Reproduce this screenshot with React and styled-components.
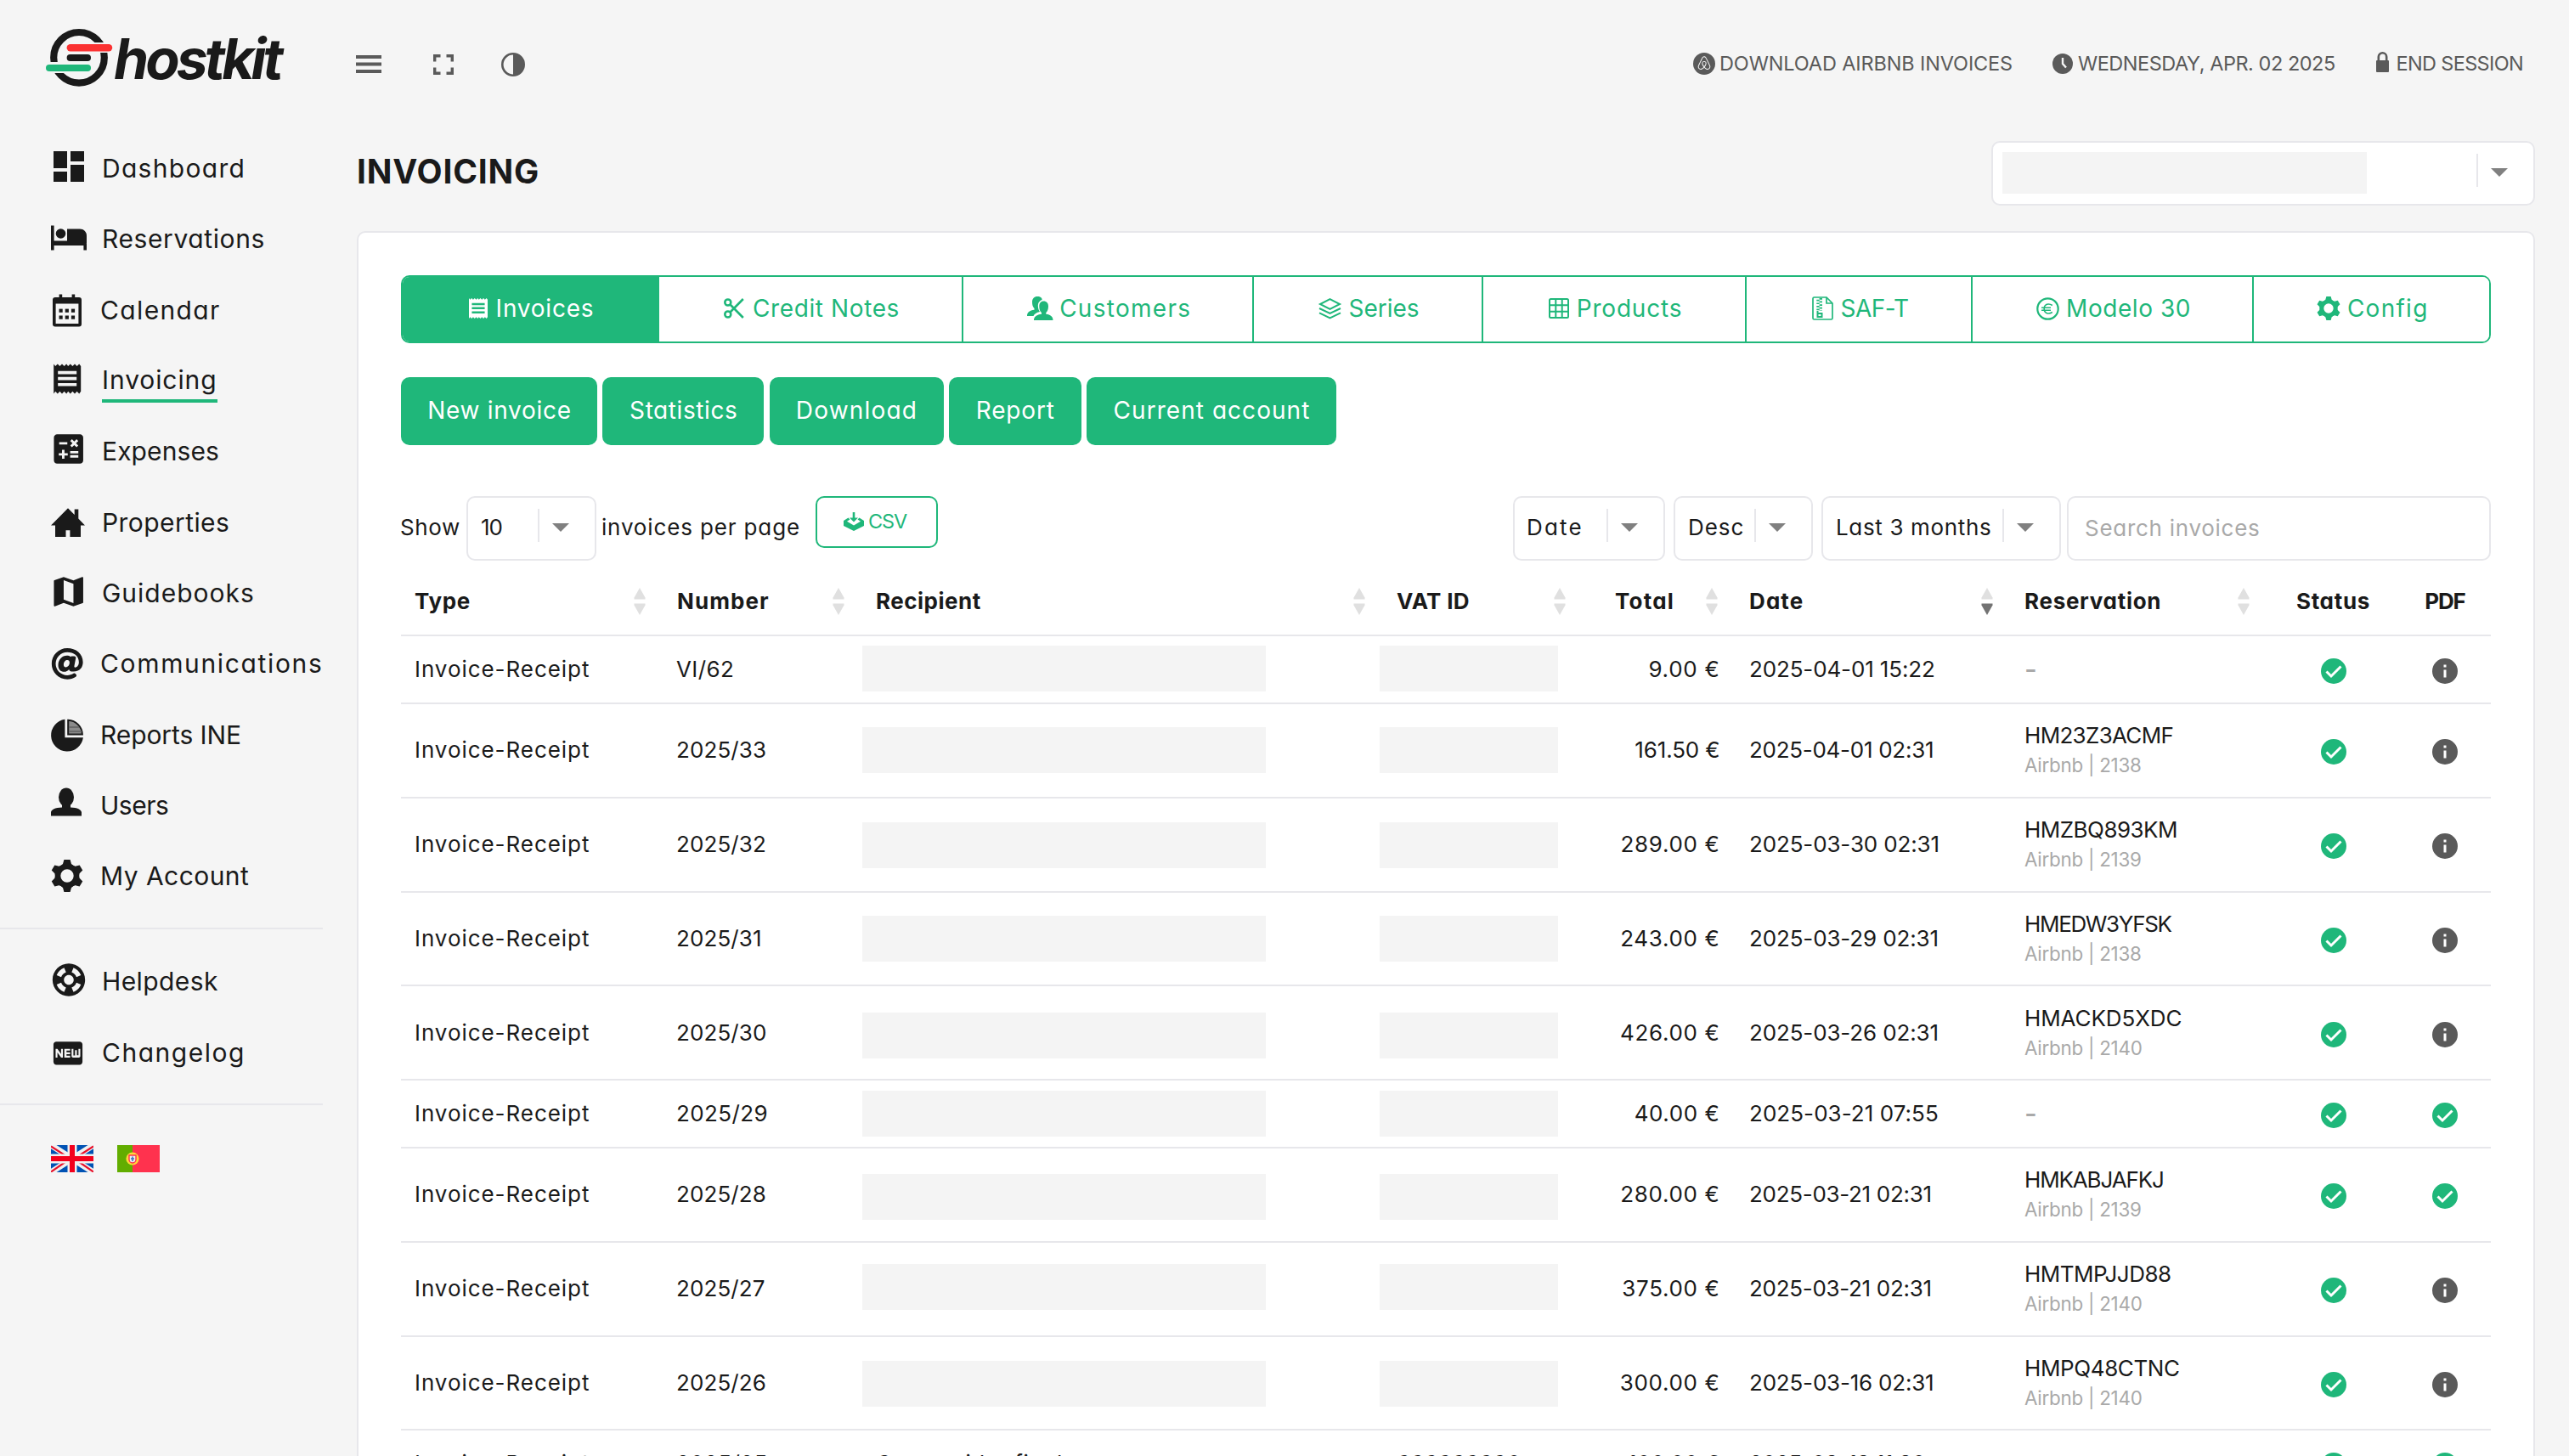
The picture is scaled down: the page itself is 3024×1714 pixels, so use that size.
import React from "react";
import styled, { createGlobalStyle, css } from "styled-components";
import {
  MdDashboard,
  MdCalculate,
  MdMap,
  MdSupport,
  MdFiberNew,
} from "react-icons/md";
import { FaAt, FaAirbnb } from "react-icons/fa";

const c = {
  bg: "#f5f5f5",
  ink: "#1a1a1a",
  grey: "#5a5a5a",
  muted: "#a9a9a9",
  green: "#1fb77a",
  line: "#e7e7eb",
  white: "#ffffff",
};

const Global = createGlobalStyle`
  *, *::before, *::after { box-sizing: border-box; }
  html, body { margin: 0; background: ${c.bg}; }
  body {
    height: 1714px;
    overflow: hidden;
    font-family: Inter, "Open Sans", sans-serif;
    font-feature-settings: "cv11";
    color: ${c.ink};
  }
`;

/* ---------- shared ---------- */
const Text = styled.span`
  letter-spacing: ${(p) => p.$ls || 0}px;
  white-space: pre;
  line-height: 1;
`;
const Svg = styled.svg`
  display: block;
  flex: none;
  overflow: visible;
`;

/* ---------- frame ---------- */
const Page = styled.div`
  display: flex;
  width: 3024px;
  height: 1714px;
  overflow: hidden;
  background: ${c.bg};
`;
const Sidebar = styled.aside`
  flex: none;
  width: 420px;
`;
const Main = styled.main`
  width: 2564px;
`;

/* ---------- sidebar ---------- */
const Brand = styled.a`
  display: flex;
  height: 156.5px;
  padding: 30px 0 0 54px;
`;
const Wordmark = styled.span`
  padding-top: 6px;
  font-size: 66px;
  line-height: 66px;
  font-weight: 700;
  font-style: italic;
  letter-spacing: -3.94px;
`;
const NavRow = styled.a`
  display: flex;
  align-items: center;
  height: 83.3px;
  padding-left: 60px;
  font-size: 30px;
`;
const NavLabel = styled(Text)`
  margin-left: ${(p) => (p.$tight ? 14 : 16)}px;
  ${(p) =>
    p.$active &&
    css`
      height: 52px;
      line-height: 50px;
      border-bottom: 4px solid ${c.green};
    `}
`;
const Rule = styled.hr`
  width: 380px;
  height: 2px;
  border: 0;
  background: ${c.line};
  margin: 19px 0 20px;
`;
const Flags = styled.div`
  display: flex;
  gap: 28px;
  padding: 27px 0 0 60px;
`;

/* ---------- top bar ---------- */
const TopBar = styled.header`
  display: flex;
  align-items: center;
  height: 149px;
  color: ${c.grey};
  font-size: 23.5px;
`;
const Tools = styled.div`
  display: flex;
  align-items: center;
  gap: 58px;
  margin: 2px auto 0 -1px;

  > :nth-child(2) {
    margin: 0 -2px 0 3px;
  }
`;
const TopItem = styled.a`
  display: flex;
  align-items: center;
  width: ${(p) => p.$w}px;
  gap: ${(p) => p.$gap}px;
`;

/* ---------- heading ---------- */
const Heading = styled.div`
  display: flex;
  justify-content: space-between;
  height: 76px;
  margin: 17px 0 30px;
`;
const Title = styled.h1`
  margin: 0;
  height: 71px;
  line-height: 71px;
  font-size: 39px;
  font-weight: 700;
  letter-spacing: 0.78px;
`;

/* ---------- card ---------- */
const Card = styled.section`
  height: 1600px;
  padding: 50px;
  background: ${c.white};
  border: 2px solid ${c.line};
  border-radius: 10px;
`;
const Tabs = styled.nav`
  display: flex;
  height: 80px;
  border-radius: 10px;
  overflow: hidden;
  border: 2px solid ${c.green};
`;
const Tab = styled.a`
  display: flex;
  justify-content: center;
  align-items: center;
  width: ${(p) => p.$w}px;
  gap: ${(p) => p.$gap}px;
  padding: 0 0 2px 3px;
  font-size: 28px;
  color: ${(p) => (p.$active ? c.white : c.green)};
  background: ${(p) => (p.$active ? c.green : c.white)};
  border-right: 2px solid ${c.green};
  &:last-child {
    border-right: 0;
  }
`;
const Actions = styled.div`
  display: flex;
  gap: 6.25px;
  margin-top: 40px;
`;
const Action = styled.button`
  width: ${(p) => p.$w}px;
  height: 80px;
  padding: 0 0 2px 1px;
  border: 0;
  border-radius: 10px;
  background: ${c.green};
  color: ${c.white};
  font: inherit;
  font-size: 28px;
`;

/* ---------- controls ---------- */
const Controls = styled.div`
  display: flex;
  align-items: flex-start;
  height: 76px;
  margin-top: 60px;
  font-size: 26px;
`;
const Inline = styled(Text)`
  line-height: 73px;
  margin: ${(p) => p.$m};
`;
const SelectBox = styled.div`
  display: flex;
  flex: none;
  width: ${(p) => p.$w}px;
  height: 76px;
  margin-left: ${(p) => p.$ml || 0}px;
  padding-left: ${(p) => p.$pl || 15}px;
  background: ${c.white};
  border: 2px solid ${c.line};
  border-radius: 10px;
`;
const SelectValue = styled(Text)`
  flex: 1;
  line-height: 69px;
`;
const SelectArrow = styled.span`
  flex: none;
  width: 67px;
  height: 39px;
  margin-top: 13px;
  padding: 17px 0 0 15px;
  border-left: 2px solid ${c.line};
`;
const Redacted = styled.span`
  width: 429px;
  height: 49px;
  margin-top: 11px;
  background: #f4f4f4;
`;
const Spacer = styled.span`
  flex: 1;
`;
const CsvButton = styled.button`
  display: flex;
  align-items: center;
  justify-content: center;
  gap: 5px;
  width: 144px;
  height: 61px;
  margin-left: 18px;
  padding: 0 4px 1px 0;
  background: ${c.white};
  border: 2px solid ${c.green};
  border-radius: 10px;
  color: ${c.green};
  font: inherit;
  font-size: 23.5px;
`;
const Search = styled.div`
  width: 499px;
  height: 76px;
  margin-left: 7px;
  padding-left: 19px;
  border: 2px solid ${c.line};
  border-radius: 10px;
  color: ${c.muted};
  line-height: 71px;
`;

/* ---------- table ---------- */
const cols = "309px 234px 613px 236px 179px 324px 302px 154px 109px";
const HeadRow = styled.div`
  display: grid;
  grid-template-columns: ${cols};
  height: 89px;
  padding-top: 9px;
  border-bottom: 2px solid ${c.line};
  font-size: 26px;
  font-weight: 700;
`;
const Th = styled.div`
  display: flex;
  align-items: center;
  justify-content: ${(p) => p.$align || "space-between"};
  gap: 37px;
  padding: ${(p) => (p.$align === "center" ? "0 0 0 1px" : "0 21px 0 16px")};
`;
const Row = styled.div`
  display: grid;
  grid-template-columns: ${cols};
  height: ${(p) => (p.$short ? 80 : 110.75)}px;
  border-bottom: 2px solid ${c.line};
  font-size: 26px;
`;
const Td = styled.div`
  display: flex;
  align-items: center;
  justify-content: ${(p) => p.$align || "flex-start"};
  padding: ${(p) => p.$pad || "0 0 0 16px"};
`;
const Mask = styled.span`
  flex: none;
  width: ${(p) => p.$w}px;
  height: 54px;
  margin-left: ${(p) => p.$ml || 0}px;
  margin-top: ${(p) => p.$shift * 2}px;
  background: #f4f4f4;
`;
const Booking = styled.div`
  display: flex;
  flex-direction: column;
  gap: 10px;
`;
const Source = styled(Text)`
  font-size: 22.4px;
  line-height: 24px;
  color: ${c.muted};
`;
const Dash = styled(Text)`
  font-size: 32px;
  font-weight: 500;
  color: ${c.muted};
`;

/* ---------- icons ---------- */
const ReceiptShape = ({ fill, bar }) => (
  <>
    <path
      d="M0 0L2 2.6L4.6 0L7.2 2.6L9.8 0L12.4 2.6L15 0L17 2.6L19.6 0L22.2 2.6L24.8 0L27.4 2.6L30 0L32 2.6V32.4L30 35L27.4 32.4L24.8 35L22.2 32.4L19.6 35L17 32.4L15 35L12.4 32.4L9.8 35L7.2 32.4L4.6 35L2 32.4L0 35Z"
      fill={fill}
    />
    <path d="M5 10.2H27M5 17.2H27M5 24.4H27" stroke={bar} strokeWidth="3.6" />
  </>
);
const GearShape = () => (
  <g fill="currentColor">
    <circle cx="19" cy="19" r="11" fill="none" stroke="currentColor" strokeWidth="6.6" />
    {[0, 60, 120, 180, 240, 300].map((a) => (
      <path key={a} transform={`rotate(${a} 19 19)`} d="M15.4 0H22.6L24 5L27 8H11L14 5Z" />
    ))}
  </g>
);
const NavIcon = ({ children }) => (
  <Svg width="44" height="44" viewBox="0 0 44 44" color={c.ink}>
    {children}
  </Svg>
);

const navIcons = {
  dashboard: <MdDashboard x={-3} y={-4} size={48} />,
  bed: (
    <g fill={c.ink}>
      <path d="M0 6.5H3.6V24.5H38.5C40.5 24.5 42 26 42 28V35.5H38.4V30H3.6V35.5H0Z" />
      <circle cx="11.5" cy="16" r="5.8" />
      <path d="M19 10.5H34C38.4 10.5 42 14 42 18.5V27H19Z" />
    </g>
  ),
  calendar: (
    <g>
      <path
        fillRule="evenodd"
        fill={c.ink}
        d="M5 7H9.6V3.4H13.2V7H24.6V3.4H28.2V7H33A3 3 0 0 1 36 10V38.6A3 3 0 0 1 33 41.6H5A3 3 0 0 1 2 38.6V10A3 3 0 0 1 5 7ZM5.6 14.6V38H32.4V14.6Z"
      />
      {[9.5, 16.7, 23.9].map((x) =>
        [20.6, 28.5].map((y) => (
          <rect key={`${x}-${y}`} x={x} y={y} width="4.2" height="4.2" fill={c.ink} />
        ))
      )}
    </g>
  ),
  receipt: (
    <g transform="translate(3.2 2.4)">
      <ReceiptShape fill={c.ink} bar={c.bg} />
    </g>
  ),
  calc: <MdCalculate x={-2.3} y={-3.4} size={46} />,
  house: (
    <path
      fill={c.ink}
      d="M20 5.3L27.7 13V6.6H32.3V17.6L40 25.5H35V39H22.4V31.3H17.5V39H5V25.5H0Z"
    />
  ),
  map: <MdMap x={-2.3} y={-2.5} size={46} />,
  at: <FaAt x={0.2} y={3.3} size={38} />,
  pie: (
    <g>
      <path d="M16.4 3.7A19 19 0 1 0 37.9 25.3H16.4Z" fill={c.ink} />
      <path d="M20.2 4.7A17.5 17.5 0 0 1 36.9 21.6H20.2Z" fill="#8b8b8b" stroke={c.ink} strokeWidth="2" />
      <path d="M21 13H33M21 18H36" stroke="#6a6a6a" strokeWidth="2" />
    </g>
  ),
  user: (
    <g fill={c.ink}>
      <ellipse cx="18" cy="12.5" rx="9" ry="11" />
      <path d="M13 21H23V24.5C31 24.8 36 27 36 30.5V34.5H0V30.5C0 27 5 24.8 13 24.5Z" />
    </g>
  ),
  gear: (
    <g transform="translate(0 3)">
      <GearShape />
    </g>
  ),
  help: <MdSupport x={-2} y={-2.5} size={46} />,
  fresh: <MdFiberNew x={-0.5} y={2.3} size={41} />,
};

const Logo = () => (
  <Svg width="80" height="76" viewBox="54 30 80 76">
    <circle cx="93" cy="67.8" r="29.8" fill="none" stroke={c.ink} strokeWidth="8.2" />
    <path d="M100 50H136V62H100ZM50 73H88V86H50Z" fill={c.bg} />
    <path d="M82.8 56.2H128" stroke="#fb3232" strokeWidth="8.4" strokeLinecap="round" />
    <path d="M82.6 68H103" stroke={c.ink} strokeWidth="8" strokeLinecap="round" />
    <path d="M58 80H103" stroke={c.green} strokeWidth="8" strokeLinecap="round" />
  </Svg>
);

const Arrow = () => (
  <Svg width="20" height="10" viewBox="0 0 20 10">
    <path d="M0 0H20L10 10Z" fill="#808080" />
  </Svg>
);

const SortIcon = ({ active }) => (
  <Svg width="14" height="32" viewBox="0 0 14 32">
    <path d="M7 0L13.5 11.5V13.5H0.5V11.5Z" fill="#e0e0e0" />
    <path d="M7 32L13.5 20.5V18.5H0.5V20.5Z" fill={active ? "#737373" : "#e0e0e0"} />
  </Svg>
);

const CheckIcon = () => (
  <Svg width="30" height="30" viewBox="0 0 30 30">
    <circle cx="15" cy="15" r="15" fill={c.green} />
    <path d="M6.5 15.5L12 21L23.5 9.5" fill="none" stroke="#fff" strokeWidth="3" />
  </Svg>
);
const InfoIcon = () => (
  <Svg width="30" height="30" viewBox="0 0 30 30">
    <circle cx="15" cy="15" r="15" fill={c.grey} />
    <path d="M15 7.5V10.5M15 13.5V22.5" stroke="#fff" strokeWidth="3" />
  </Svg>
);

const tabIcons = {
  receipt: (
    <Svg width="22" height="24" viewBox="0 0 32 35" preserveAspectRatio="none">
      <ReceiptShape fill={c.white} bar={c.green} />
    </Svg>
  ),
  scissors: (
    <Svg width="24" height="24" viewBox="0 0 24 24" fill="none" stroke={c.green} strokeWidth="2.6">
      <circle cx="4.8" cy="5" r="3.5" />
      <circle cx="4.8" cy="19" r="3.5" />
      <path d="M7.5 7.5L22.8 23M7.5 16.5L22.8 1" />
    </Svg>
  ),
  people: (
    <Svg width="31" height="28" viewBox="0 0 31 28" fill={c.green}>
      <path d="M12 0C16 0 17.8 2 17.6 4C14 5.500 12.600 8 12.900 12C13 14.500 14 16.500 15 18C11 19 8.500 20.500 7.500 23H0C0 18.500 3 16.500 8.500 15.800V14C6.500 12 6 9.500 6 6.500C6 2.500 8.500 0 12 0Z" />
      <path d="M19.500 5.500C23 5.500 25 8 25 11.500C25 15 24 17.500 22.300 19V20.800C27.500 21.500 30.500 23.500 30.500 28H8C8 23.500 11.500 21.500 17 20.800V19C15 17.500 14.300 15 14.300 11.500C14.300 8 16 5.500 19.500 5.500Z" />
    </Svg>
  ),
  layers: (
    <Svg width="27" height="25" viewBox="0 0 27 25" fill="none" stroke={c.green} strokeWidth="2">
      <path d="M13.5 1.2L25 7L13.5 12.8L2 7Z" />
      <path d="M1 12L13.5 18L26 12M1 17.3L13.5 23.3L26 17.3" />
    </Svg>
  ),
  grid: (
    <Svg width="24" height="24" viewBox="0 0 24 24" fill="none" stroke={c.green} strokeWidth="2">
      <rect x="1" y="1" width="22" height="22" rx="1.5" />
      <path d="M8.300 1V23M15.700 1V23M1 8.300H23M1 15.700H23" />
    </Svg>
  ),
  zip: (
    <Svg width="25" height="28" viewBox="0 0 25 28" fill="none" stroke={c.green} strokeWidth="1.7">
      <path d="M2.5 1H17L24 8V25.5Q24 27 22.5 27H2.5Q1 27 1 25.5V2.5Q1 1 2.5 1Z" />
      <path d="M17 1V8H24" />
      <path d="M10.3 2V17" strokeWidth="3.4" strokeDasharray="1.7 1.9" />
      <path d="M7 3.8V17" strokeWidth="3.4" strokeDasharray="1.7 1.9" />
      <path d="M6.5 17V24H11.5V20H6.5" strokeWidth="2" />
    </Svg>
  ),
  euro: (
    <Svg width="27" height="27" viewBox="0 0 27 27" fill="none" stroke={c.green} strokeWidth="2.2">
      <circle cx="13.5" cy="13.5" r="12.2" />
      <path d="M18.8 9.5C14.5 6.5 9.2 8 9.2 13.5C9.2 19 14.5 20.5 18.8 17.5M6 12.2H17M6 15.2H17" strokeWidth="1.6" />
    </Svg>
  ),
  gear: (
    <Svg width="28" height="28" viewBox="0 0 38 38" color={c.green}>
      <GearShape />
    </Svg>
  ),
};

const UkFlag = () => (
  <Svg width="50" height="32" viewBox="0 0 50 32">
    <clipPath id="uk">
      <rect width="50" height="32" />
    </clipPath>
    <g clipPath="url(#uk)">
      <rect width="50" height="32" fill="#0052b4" />
      <path d="M0 0L50 32M50 0L0 32" stroke="#f0f0f0" strokeWidth="7" />
      <path d="M0 1.5L21 15M50 1.5L29 15M0 31.5L21 17M50 31.5L29 17" stroke="#e8102a" strokeWidth="2.2" />
      <path d="M25 0V32M0 16H50" stroke="#f0f0f0" strokeWidth="11" />
      <path d="M25 0V32M0 16H50" stroke="#f3001c" strokeWidth="6" />
    </g>
  </Svg>
);
const PtFlag = () => (
  <Svg width="50" height="32" viewBox="0 0 50 32">
    <rect width="50" height="32" fill="#ff324e" />
    <rect width="18" height="32" fill="#62ad00" />
    <circle cx="18" cy="16" r="7.6" fill="#ffd83b" />
    <path d="M14 12H22V17A4 4 0 0 1 14 17Z" fill="#f0f0f0" stroke="#ff324e" strokeWidth="1.4" />
    <path d="M18 13.5V19M16 16H20" stroke="#3c6fc0" strokeWidth="1.5" />
  </Svg>
);

/* ---------- data ---------- */
const nav = [
  ["Dashboard", "dashboard", 1.3],
  ["Reservations", "bed", 0.6],
  ["Calendar", "calendar", 1.36, true],
  ["Invoicing", "receipt", 0.9],
  ["Expenses", "calc", 0.1],
  ["Properties", "house", 0.43],
  ["Guidebooks", "map", 0.99],
  ["Communications", "at", 1.65, true],
  ["Reports INE", "pie", -0.09, true],
  ["Users", "user", -0.49, true],
  ["My Account", "gear", 0.45, true],
];
const navExtra = [
  ["Helpdesk", "help", 0.41],
  ["Changelog", "fresh", 1.51],
];
const tabs = [
  ["Invoices", "receipt", 302, 10, 0.79],
  ["Credit Notes", "scissors", 358, 10, 0.61],
  ["Customers", "people", 342, 7.5, 1.29],
  ["Series", "layers", 270, 8, 0],
  ["Products", "grid", 310, 9, 0.81],
  ["SAF-T", "zip", 266, 9, -0.58],
  ["Modelo 30", "euro", 331, 8, 0.55],
  ["Config", "gear", 277, 7.5, 1.27],
];
const actions = [
  ["New invoice", 231, 0.71],
  ["Statistics", 190, 0.59],
  ["Download", 205, 1.19],
  ["Report", 156, 0.83],
  ["Current account", 294, 1.04],
];
const heads = [
  ["Type", 0.7],
  ["Number", 1.1],
  ["Recipient", 0.5],
  ["VAT ID", 0.3],
  ["Total", 1.2, "flex-end"],
  ["Date", 1.1],
  ["Reservation", 0.7],
];
const rows = [
  { no: "VI/62", total: "9.00 €", tls: 0.72, date: "2025-04-01 15:22", dls: -0.14, shift: -1 },
  { no: "2025/33", total: "161.50 €", tls: -0.13, date: "2025-04-01 02:31", dls: -0.28, code: "HM23Z3ACMF", cls: -0.69, src: "2138", shift: -0.5 },
  { no: "2025/32", total: "289.00 €", tls: 0.66, date: "2025-03-30 02:31", dls: -0.14, code: "HMZBQ893KM", cls: -0.53, src: "2139", shift: 0.5 },
  { no: "2025/31", total: "243.00 €", tls: 0.66, date: "2025-03-29 02:31", dls: -0.14, code: "HMEDW3YFSK", cls: -1.34, src: "2138", shift: 0 },
  { no: "2025/30", total: "426.00 €", tls: 0.66, date: "2025-03-26 02:31", dls: -0.14, code: "HMACKD5XDC", cls: -0.1, src: "2140", shift: 3 },
  { no: "2025/29", total: "40.00 €", tls: 0.58, date: "2025-03-21 07:55", dls: 0.05, shift: 0, pdf: true },
  { no: "2025/28", total: "280.00 €", tls: 0.66, date: "2025-03-21 02:31", dls: -0.3, code: "HMKABJAFKJ", cls: -1.15, src: "2139", shift: 3, pdf: true },
  { no: "2025/27", total: "375.00 €", tls: 0.66, date: "2025-03-21 02:31", dls: -0.3, code: "HMTMPJJD88", cls: -0.53, src: "2140", shift: -2 },
  { no: "2025/26", total: "300.00 €", tls: 0.66, date: "2025-03-16 02:31", dls: -0.2, code: "HMPQ48CTNC", cls: -0.39, src: "2140", shift: 1 },
  { no: "2025/25", total: "100.00 €", tls: 0.2, date: "2025-03-13 11:30", dls: -0.5, name: "Consumidor final", vat: "999999990", pdf: true },
];

const NavItem = ({ item, active }) => (
  <NavRow>
    <NavIcon>{navIcons[item[1]]}</NavIcon>
    <NavLabel $ls={item[2]} $tight={item[3]} $active={active}>
      {item[0]}
    </NavLabel>
  </NavRow>
);

const Select = ({ value, ls, w, ml, pl }) => (
  <SelectBox $w={w} $ml={ml} $pl={pl}>
    <SelectValue $ls={ls}>{value}</SelectValue>
    <SelectArrow>
      <Arrow />
    </SelectArrow>
  </SelectBox>
);

const InvoiceRow = ({ r }) => (
  <Row $short={!r.code}>
    <Td>
      <Text $ls={0.95}>Invoice-Receipt</Text>
    </Td>
    <Td $pad="0 0 0 15px">
      <Text $ls={r.code ? 0.11 : 0.4}>{r.no}</Text>
    </Td>
    {r.name ? (
      <Td>
        <Text $ls={0.6}>{r.name}</Text>
      </Td>
    ) : (
      <Td $pad="0">
        <Mask $w={475} $shift={r.shift} />
      </Td>
    )}
    {r.vat ? (
      <Td $pad="0 0 0 17px">
        <Text>{r.vat}</Text>
      </Td>
    ) : (
      <Td $pad="0">
        <Mask $w={210} $ml={-4} $shift={r.shift} />
      </Td>
    )}
    <Td $align="flex-end" $pad="0 18.5px 0 0">
      <Text $ls={r.tls}>{r.total}</Text>
    </Td>
    <Td>
      <Text $ls={r.dls}>{r.date}</Text>
    </Td>
    <Td>
      {r.code ? (
        <Booking>
          <Text $ls={r.cls}>{r.code}</Text>
          <Source $ls={-0.25}>Airbnb | {r.src}</Source>
        </Booking>
      ) : (
        <Dash>-</Dash>
      )}
    </Td>
    <Td $align="center" $pad="4px 0 0 1px">
      <CheckIcon />
    </Td>
    <Td $align="center" $pad="4px 0 0 1px">
      {r.pdf ? <CheckIcon /> : <InfoIcon />}
    </Td>
  </Row>
);

export default function App() {
  return (
    <>
      <Global />
      <Page>
        <Sidebar>
          <Brand>
            <Logo />
            <Wordmark>hostkit</Wordmark>
          </Brand>
          {nav.map((n) => (
            <NavItem key={n[0]} item={n} active={n[0] === "Invoicing"} />
          ))}
          <Rule />
          {navExtra.map((n) => (
            <NavItem key={n[0]} item={n} />
          ))}
          <Rule />
          <Flags>
            <UkFlag />
            <PtFlag />
          </Flags>
        </Sidebar>

        <Main>
          <TopBar>
            <Tools>
              <Svg width="30" height="22" viewBox="0 0 30 22">
                <path d="M0 2H30M0 10.5H30M0 19H30" stroke={c.grey} strokeWidth="4" />
              </Svg>
              <Svg width="24" height="24" viewBox="0 0 24 24" fill="none" stroke={c.grey} strokeWidth="3.4">
                <path d="M1.7 8.5V1.7H8.5M15.5 1.7H22.3V8.5M22.3 15.5V22.3H15.5M8.5 22.3H1.7V15.5" />
              </Svg>
              <Svg width="28" height="28" viewBox="0 0 28 28">
                <circle cx="14" cy="14" r="12.7" fill="none" stroke={c.grey} strokeWidth="2.6" />
                <path d="M14 1A13 13 0 0 1 14 27Z" fill={c.grey} />
              </Svg>
            </Tools>
            <TopItem $w={423} $gap={5}>
              <Svg width="26" height="26" viewBox="0 0 26 26" color={c.bg}>
                <circle cx="13" cy="13" r="13" fill={c.grey} />
                <FaAirbnb x={4} y={3} size={18} />
              </Svg>
              <Text $ls={-0.13}>DOWNLOAD AIRBNB INVOICES</Text>
            </TopItem>
            <TopItem $w={381} $gap={6}>
              <Svg width="24" height="24" viewBox="0 0 24 24">
                <circle cx="12" cy="12" r="12" fill={c.grey} />
                <path d="M12 5V12L16 16.5" fill="none" stroke={c.bg} strokeWidth="2.4" />
              </Svg>
              <Text $ls={-0.47}>WEDNESDAY, APR. 02 2025</Text>
            </TopItem>
            <TopItem $w={187} $gap={8.5}>
              <Svg width="15" height="27" viewBox="0 0 15 27">
                <path d="M2.8 12V6A4.7 4.7 0 0 1 12.2 6V12" fill="none" stroke={c.grey} strokeWidth="2.6" />
                <rect y="10" width="15" height="14" rx="1" fill={c.grey} />
              </Svg>
              <Text $ls={-0.66}>END SESSION</Text>
            </TopItem>
          </TopBar>

          <Heading>
            <Title>INVOICING</Title>
            <SelectBox $w={640} $pl={11}>
              <Redacted />
              <Spacer />
              <SelectArrow>
                <Arrow />
              </SelectArrow>
            </SelectBox>
          </Heading>

          <Card>
            <Tabs>
              {tabs.map(([label, icon, w, gap, ls], i) => (
                <Tab key={label} $w={w} $gap={gap} $active={i === 0}>
                  {tabIcons[icon]}
                  <Text $ls={ls}>{label}</Text>
                </Tab>
              ))}
            </Tabs>
            <Actions>
              {actions.map(([label, w, ls]) => (
                <Action key={label} $w={w}>
                  <Text $ls={ls}>{label}</Text>
                </Action>
              ))}
            </Actions>
            <Controls>
              <Inline $ls={0.61} $m="0 7px 0 -1px">Show</Inline>
              <Select value="10" ls={-1.08} w={153} />
              <Inline $ls={0.86} $m="0 0 0 6px">invoices per page</Inline>
              <CsvButton>
                <Svg width="24" height="22" viewBox="0 0 24 22" fill={c.green}>
                  <path d="M10.7 0H13.3V6.5H17L12 11.5L7 6.5H10.7Z" />
                  <path d="M0 10L5.5 6.5L7.5 8.5L4 10.7L12 15.5L20 10.7L16.5 8.5L18.5 6.5L24 10V16L12 22L0 16Z" />
                </Svg>
                <Text $ls={-1.13}>CSV</Text>
              </CsvButton>
              <Spacer />
              <Select value="Date" ls={2.15} w={179} pl={14} />
              <Select value="Desc" ls={0.95} w={164} ml={10} />
              <Select value="Last 3 months" ls={0.65} w={282} ml={10} />
              <Search>
                <Text $ls={0.72}>Search invoices</Text>
              </Search>
            </Controls>

            <HeadRow>
              {heads.map(([label, ls, align]) => (
                <Th key={label} $align={align}>
                  <Text $ls={ls}>{label}</Text>
                  <SortIcon active={label === "Date"} />
                </Th>
              ))}
              <Th $align="center">
                <Text $ls={0.7}>Status</Text>
              </Th>
              <Th $align="center">
                <Text $ls={-1.2}>PDF</Text>
              </Th>
            </HeadRow>
            {rows.map((r) => (
              <InvoiceRow key={r.no} r={r} />
            ))}
          </Card>
        </Main>
      </Page>
    </>
  );
}
